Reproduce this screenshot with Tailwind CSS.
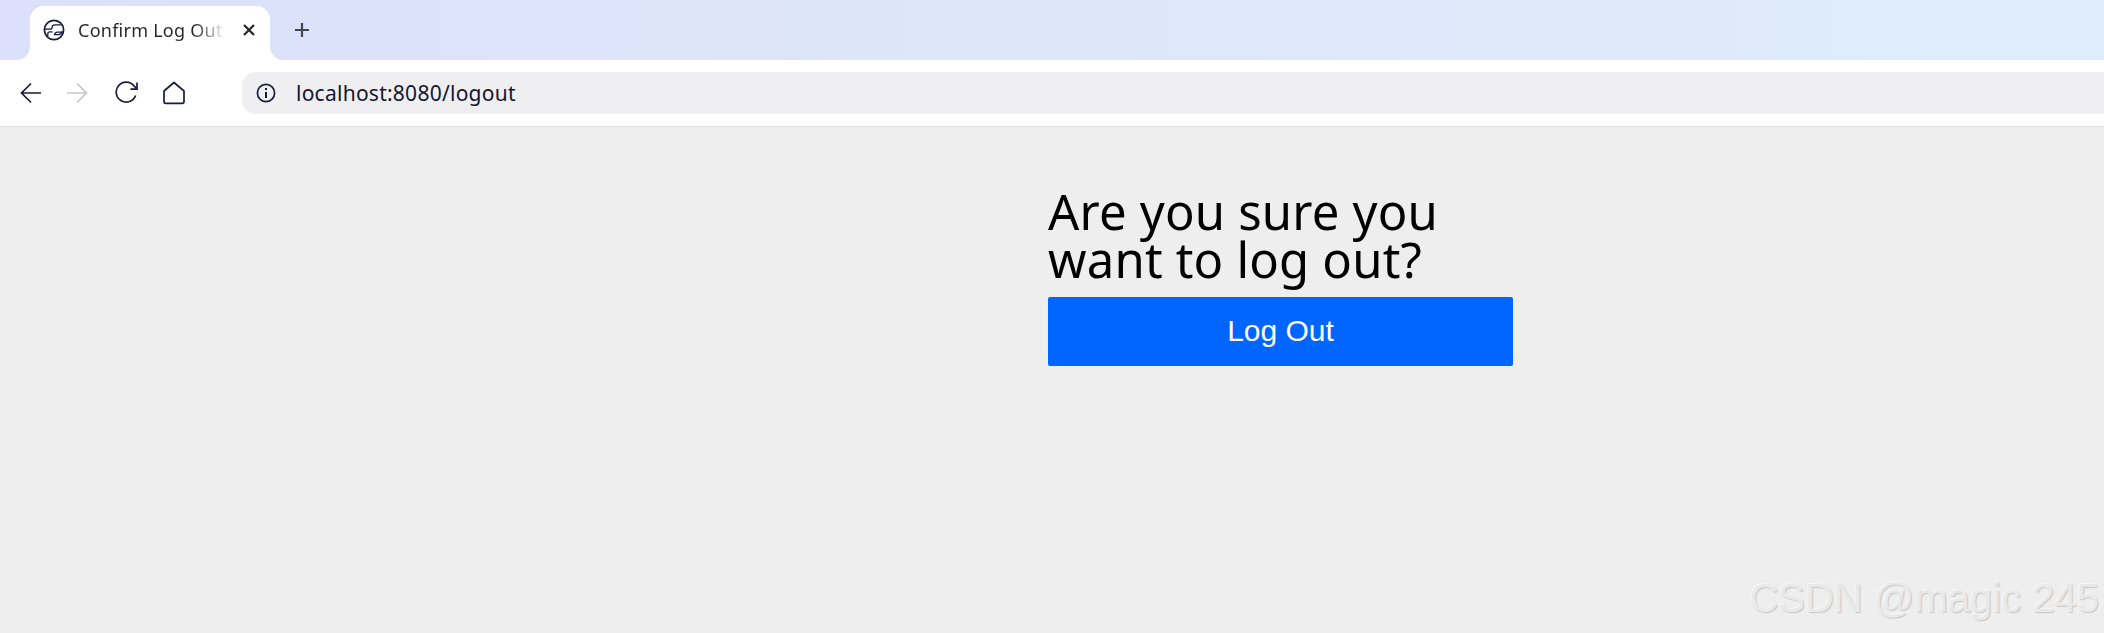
<!DOCTYPE html>
<html lang="en">
<head>
  <meta charset="UTF-8" />
  <meta name="viewport" content="width=device-width, initial-scale=1.0"/>
  <title>Confirm Log Out?</title>
  <script src="https://cdn.jsdelivr.net/npm/@tailwindcss/browser@4"></script>
</head>
<body class="relative h-[633px] w-[2104px] overflow-hidden bg-[#eeeeee] font-['Noto_Sans',sans-serif]">
  <!-- tab strip -->
  <div class="flex h-[60px] items-end bg-linear-to-r from-[#dce0fa] to-[#dfedfa] pl-[30px]">
    <div class="relative flex h-[54px] w-[240px] items-center rounded-t-[14px] bg-white pb-[6px] pl-[13px]">
      <!-- left flare, also rounds the toolbar corner -->
      <svg class="absolute bottom-[-14px] left-[-30px]" width="30" height="28" viewBox="0 0 30 28">
        <path d="M30 0C30 8 24 14 16 14C7 14 0 20 0 28H30Z" fill="#fff"/>
      </svg>
      <!-- right flare -->
      <svg class="absolute bottom-0 right-[-14px]" width="14" height="14" viewBox="0 0 14 14">
        <path d="M0 0C0 8 6 14 14 14H0Z" fill="#fff"/>
      </svg>
      <svg width="22" height="22" viewBox="0 0 22 22" fill="none" stroke="#181b3c" stroke-width="1.3" stroke-linecap="round" stroke-linejoin="round">
        <circle cx="11" cy="11" r="9.6" stroke-width="1.7"/>
        <path d="M2 10.2H6.5C8.4 10.2 9.2 9.4 9.2 8C9.2 6.6 10.4 5.8 12 5.8H17.5"/>
        <path d="M4.8 17V14.8C4.8 13.5 5.6 12.9 6.8 12.9H9"/>
        <path d="M11.5 15.6C12 14 13 13.2 14.5 13.2H20.2"/>
        <path d="M11.5 15.6H15.5C17 15.6 18 15 18.5 13.2"/>
      </svg>
      <div class="ml-[13px] w-[147px] overflow-hidden whitespace-nowrap bg-linear-to-r from-[#27272a] from-[78%] to-[#ffffff] bg-clip-text text-[18px] leading-[24px] tracking-[0.25px] text-transparent">Confirm Log Out</div>
      <svg class="ml-[17px]" width="14" height="14" viewBox="0 0 14 14" fill="none" stroke="#26262a" stroke-width="2.2">
        <path d="M2 2L12 12M12 2L2 12"/>
      </svg>
    </div>
    <svg class="mb-[22px] ml-[24px]" width="16" height="16" viewBox="0 0 16 16" fill="none" stroke="#46464a" stroke-width="2.2">
      <path d="M8 1V15M1 8H15"/>
    </svg>
  </div>

  <!-- toolbar -->
  <div class="flex h-[67px] items-center border-b border-[#e0dfe6] bg-white">
    <div class="flex w-[242px] items-center pb-[1px]">
      <svg class="ml-[20px]" width="22" height="22" viewBox="0 0 22 22" fill="none" stroke="#181b3c" stroke-width="1.7">
        <path d="M21 11H2M11 1.5L1.5 11L11 20.5"/>
      </svg>
      <svg class="ml-[24px]" width="22" height="22" viewBox="0 0 22 22" fill="none" stroke="#c6c6d0" stroke-width="1.7">
        <path d="M1 11H20M11 1.5L20.5 11L11 20.5"/>
      </svg>
      <svg class="ml-[27px]" width="24" height="24" viewBox="0 0 24 24" fill="none" stroke="#181b3c" stroke-width="1.7">
        <path d="M20.6 14.5A10 10 0 1 1 18.8 4.6L22 8"/>
        <path d="M22 1.5V8.2H15.4"/>
      </svg>
      <svg class="ml-[24px]" width="22" height="24" viewBox="0 0 22 24" fill="none" stroke="#181b3c" stroke-width="1.7" stroke-linejoin="round">
        <path d="M11 1.5L21 10V20.5C21 21.6 20.3 22.3 19.2 22.3H2.8C1.7 22.3 1 21.6 1 20.5V10Z"/>
      </svg>
    </div>
    <div class="flex h-[42px] flex-1 items-center rounded-l-[14px] bg-[#efeff2] pl-[14px]">
      <svg width="20" height="20" viewBox="0 0 20 20" fill="none" stroke="#181b3c" stroke-width="1.7">
        <circle cx="10" cy="10" r="8.6"/>
        <path d="M10 9V15" stroke-width="2"/>
        <path d="M10 5V7" stroke-width="2"/>
      </svg>
      <span class="ml-[20px] text-[21px] leading-[26px] tracking-[0.25px] text-[#14162e]">localhost:8080/logout</span>
    </div>
  </div>

  <!-- page -->
  <main class="ml-[1048px] w-[465px] pt-[60px]">
    <h1 class="text-[49px] leading-[48px] tracking-[0.2px] text-black">Are you sure you want to log out?</h1>
    <form class="mt-[14px]">
      <button type="button" class="h-[69px] w-full rounded-[2px] bg-[#0066ff] pb-[2px] font-['Liberation_Sans',sans-serif] text-[30px] text-white">Log Out</button>
    </form>
  </main>

  <!-- watermark -->
  <div class="absolute bottom-[12px] right-[5px] font-['Liberation_Sans',sans-serif] text-[40px] leading-[46px] whitespace-nowrap text-[#e9e9e9] [text-shadow:1px_1px_1px_#c6c6c6,-1px_-1px_0_#f6f6f6]">CSDN @magic 245</div>
</body>
</html>
